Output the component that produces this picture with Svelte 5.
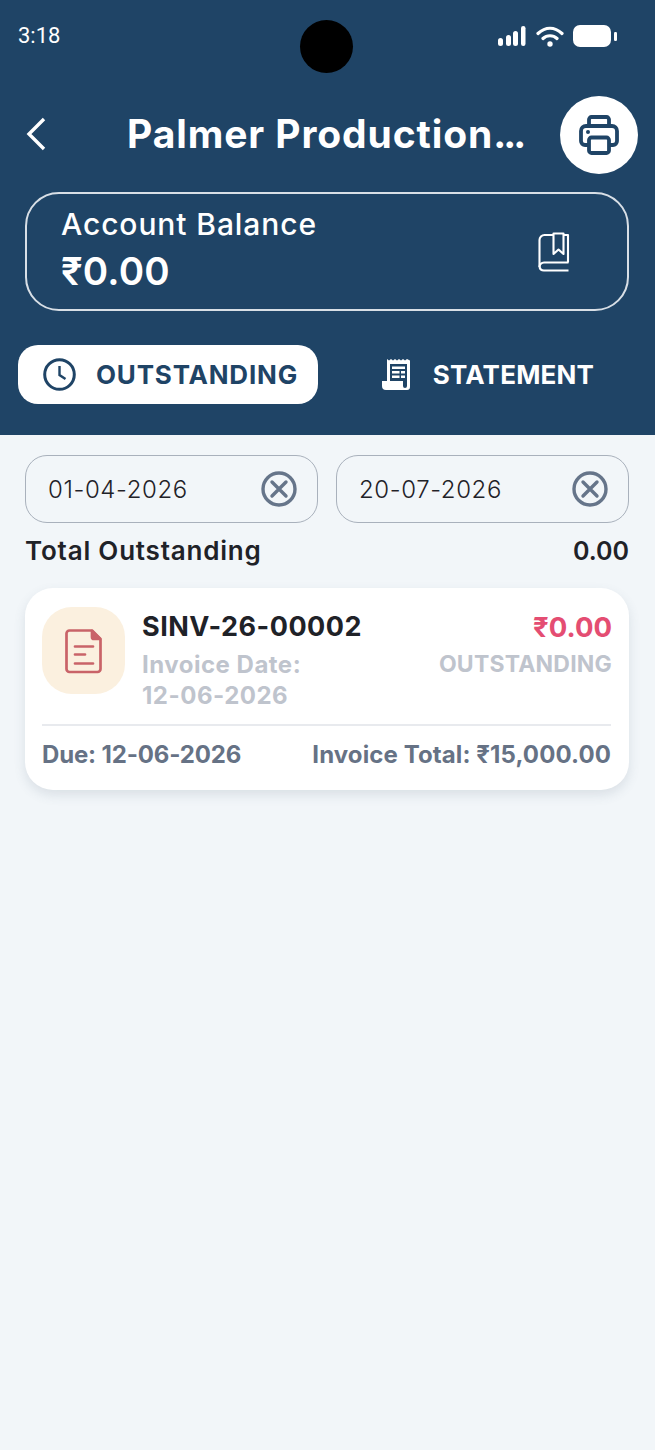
<script>
  const dates = ['01-04-2026', '20-07-2026'];
</script>

<div class="page">
  <header class="hero">
    <div class="status">
      <span class="time">3:18</span>
      <span class="camera"></span>
      <div class="sys">
        <svg width="29" height="22" viewBox="0 0 29 22"><g fill="#fff"><rect x="1" y="13" width="5" height="8" rx="2.500"/><rect x="9" y="10" width="5" height="11" rx="2.500"/><rect x="16" y="6" width="5" height="15" rx="2.500"/><rect x="24" y="1" width="4.500" height="20" rx="2.200"/></g></svg>
        <svg width="28" height="22" viewBox="0 0 28 22"><path d="M2 8.500C9.500 1.500 18.500 1.500 26 8.500M7 13.500C11 9.800 17 9.800 21 13.500" fill="none" stroke="#fff" stroke-width="3.200" stroke-linecap="round"/><circle cx="14" cy="19" r="2.700" fill="#fff"/></svg>
        <svg width="44" height="22" viewBox="0 0 44 22"><rect x="0" y="0" width="38" height="22" rx="7" fill="#fff"/><rect x="41" y="7" width="3" height="9" rx="1.200" fill="#fff"/></svg>
      </div>
    </div>

    <div class="title-row">
      <svg class="back" width="24" height="34" viewBox="0 0 24 34"><path d="M20 2 5 17l15 15" fill="none" stroke="#fff" stroke-width="3.400"/></svg>
      <h1>Palmer Production<span class="dots">...</span></h1>
      <button class="print" aria-label="Print">
        <svg width="40" height="40" viewBox="0 0 40 40" fill="none" stroke="#1f4466" stroke-width="3.800" stroke-linejoin="round"><path d="M10 11V4.500a2.500 2.500 0 0 1 2.500-2.500h15a2.500 2.500 0 0 1 2.500 2.500V11"/><path d="M9 30H6a4 4 0 0 1-4-4V16a5 5 0 0 1 5-5h26a5 5 0 0 1 5 5v10a4 4 0 0 1-4 4h-3"/><rect x="10" y="22.500" width="20" height="15.500" rx="2.500"/><circle cx="9" cy="17" r="2" fill="#1f4466" stroke="none"/></svg>
      </button>
    </div>

    <section class="balance">
      <div class="bal-text">
        <div class="bal-label">Account Balance</div>
        <div class="bal-value">₹0.00</div>
      </div>
      <svg width="32" height="40" viewBox="0 0 32 40" fill="none" stroke="#fff" stroke-width="2.100" stroke-linejoin="round"><path d="M1.500 35V8a5 5 0 0 1 5-5h9M25.500 3h4.500v27.500"/><path d="M1.500 35a4.500 4.500 0 0 1 4.500-4.500h24.500M30.500 38.500H6A4.500 4.500 0 0 1 1.500 35"/><path d="M15.500 1.500V22l5-4.500 5 4.500V1.500Z"/></svg>
    </section>

    <nav class="tabs">
      <button class="tab active">
        <svg width="33" height="33" viewBox="0 0 33 33" fill="none" stroke="#1f4466"><circle cx="16.500" cy="16.500" r="14.800" stroke-width="3"/><path d="M16.500 8v9l6 4" stroke-width="2.400"/></svg>
        <span class="wide">OUTSTANDING</span>
      </button>
      <button class="tab second">
        <svg width="30" height="33" viewBox="0 0 30 33"><path fill="#fff" fill-rule="evenodd" d="M6 1l2 1.500L10 1l2 1.500L14 1l2 1.500L18 1l2 1.500L22 1l2 1.500L26 1l3 1.500V29a3 3 0 0 1-3 3H5a4 4 0 0 1-4-4V23h5ZM9 6v17h13v5a2 2 0 0 0 4 0V6Z"/><path fill="#fff" d="M11 8.500h13v2.500H11ZM11 13h7.500v2.500H11ZM20 13h4v2.500h-4ZM11 17.500h7.500V20H11ZM20 17.500h4V20h-4Z"/></svg>
        <span class="narrow">STATEMENT</span>
      </button>
    </nav>
  </header>

  <main class="content">
    <div class="dates">
      {#each dates as d}
        <div class="date">
          <span>{d}</span>
          <svg width="36" height="36" viewBox="0 0 36 36" fill="none" stroke="#66758a" stroke-width="3.400"><circle cx="18" cy="18" r="16"/><path d="m11 11 14 14M25 11 11 25" stroke-linecap="round"/></svg>
        </div>
      {/each}
    </div>

    <div class="total"><span class="total-label">Total Outstanding</span><span>0.00</span></div>

    <article class="card">
      <div class="card-top">
        <div class="doc">
          <svg width="38" height="46" viewBox="0 0 38 46" fill="none" stroke="#c96368" stroke-width="2.700" stroke-linejoin="round"><path d="M4.500 2.500H27L35.500 11v30a3 3 0 0 1-3 3h-28a3 3 0 0 1-3-3V5.500a3 3 0 0 1 3-3Z"/><path d="M27 3v6a2 2 0 0 0 2 2h6Z" fill="#c96368"/><path d="M10 18.500h18M10 26.500h10M10 35.500h18" stroke-linecap="round"/></svg>
        </div>
        <div class="info">
          <div class="inv">SINV-26-00002</div>
          <div class="muted">Invoice Date:<br>12-06-2026</div>
        </div>
        <div class="amount">
          <div class="amt">₹0.00</div>
          <div class="muted caps">OUTSTANDING</div>
        </div>
      </div>
      <div class="card-foot"><span class="due">Due: 12-06-2026</span><span class="sum">Invoice Total: ₹15,000.00</span></div>
    </article>
  </main>
</div>

<style>
  :global(body) { margin: 0; background: #f2f6f9; }
  .page { width: 655px; height: 1450px; background: #f2f6f9; font-family: "Inter", "Noto Sans", sans-serif; overflow: hidden; }
  .hero { background: #1f4466; height: 435px; box-sizing: border-box; padding: 0 18px; }
  .status { position: relative; height: 96px; display: flex; justify-content: space-between; align-items: flex-start; padding-top: 24px; box-sizing: border-box; }
  .time { color: #fff; font: 400 22px/24px Roboto, sans-serif; }
  .camera { position: absolute; left: 282px; top: 20px; width: 53px; height: 53px; border-radius: 50%; background: #000; }
  .sys { display: flex; gap: 9.500px; align-items: center; margin-right: 20px; margin-top: 1px; }
  .title-row { display: flex; align-items: center; height: 77px; margin-right: -1px; }
  .back { margin-left: 6px; margin-top: -2px; }
  h1 { flex: 1; margin: -2px 0 0; color: #fff; font-size: 39px; font-weight: 700; white-space: nowrap; letter-spacing: .9px; padding-left: 79px; }
  .dots { letter-spacing: -3px; }
  .print { width: 78px; height: 78px; border: 0; border-radius: 50%; background: #fff; display: flex; align-items: center; justify-content: center; padding: 0; }
  .balance { margin: 19px 8px 0 7px; height: 119px; box-sizing: border-box; border: 2px solid #d8dfe6; border-radius: 34px; display: flex; align-items: center; justify-content: space-between; padding: 0 57px 0 34px; color: #fff; }
  .bal-text { padding-top: 4px; }
  .bal-label { font-size: 30px; font-weight: 500; line-height: 36px; letter-spacing: .9px; margin-top: -6px; }
  .bal-value { font-size: 38.500px; font-weight: 600; line-height: 48px; letter-spacing: .2px; margin-top: 5px; }
  .tabs { display: grid; grid-template-columns: 300px 300px; gap: 18px; margin-top: 34px; }
  .tab { height: 59px; border: 0; border-radius: 20px; background: transparent; color: #fff; font: 700 26px "Inter", sans-serif; display: flex; align-items: center; justify-content: center; gap: 20px; padding: 0 0 0 5px; }
  .tab.second { gap: 22px; padding-left: 3px; }
  .wide { letter-spacing: .8px; }
  .narrow { letter-spacing: .2px; }
  .tab.active { background: #fff; color: #1f4466; }
  .content { padding: 20px 26px 0 25px; }
  .dates { display: grid; grid-template-columns: 1fr 1fr; gap: 18px; }
  .date { height: 68px; box-sizing: border-box; border: 1px solid #a9b1bc; border-radius: 22px; display: flex; align-items: center; justify-content: space-between; padding: 0 20px 0 22px; color: #1f2228; font-size: 24px; font-weight: 300; letter-spacing: .6px; }
  .total { display: flex; justify-content: space-between; margin-top: 11px; color: #1f2228; font-size: 25px; font-weight: 600; line-height: 34px; }
  .total-label { font-size: 26px; letter-spacing: .8px; }
  .card { margin-top: 20px; background: #fff; border-radius: 28px; padding: 19px 18px 0 17px; height: 202px; box-sizing: border-box; box-shadow: 0 5px 12px rgba(70, 90, 110, .14); }
  .card-top { display: flex; height: 117px; border-bottom: 2px solid #e8eaee; }
  .doc { width: 83px; height: 87px; border-radius: 30px; background: #fbf0df; display: flex; align-items: center; justify-content: center; flex: none; }
  .info { flex: 1; margin-left: 17px; padding-top: 1px; }
  .inv { color: #1f2228; font-size: 27px; font-weight: 700; line-height: 38px; letter-spacing: .5px; margin-bottom: 3px; }
  .muted { color: #bfc4cd; font-size: 24px; font-weight: 700; line-height: 31px; letter-spacing: .5px; }
  .caps { font-size: 23px; letter-spacing: .2px; }
  .amount { text-align: right; margin-right: -1px; padding-top: 1px; }
  .amt { color: #e44d72; font-size: 27.500px; font-weight: 700; line-height: 38px; margin-bottom: 3px; }
  .card-foot { display: flex; justify-content: space-between; color: #667285; font-size: 24px; font-weight: 700; line-height: 58px; }
  .due { letter-spacing: -.15px; }
  .sum { letter-spacing: .1px; }
</style>
